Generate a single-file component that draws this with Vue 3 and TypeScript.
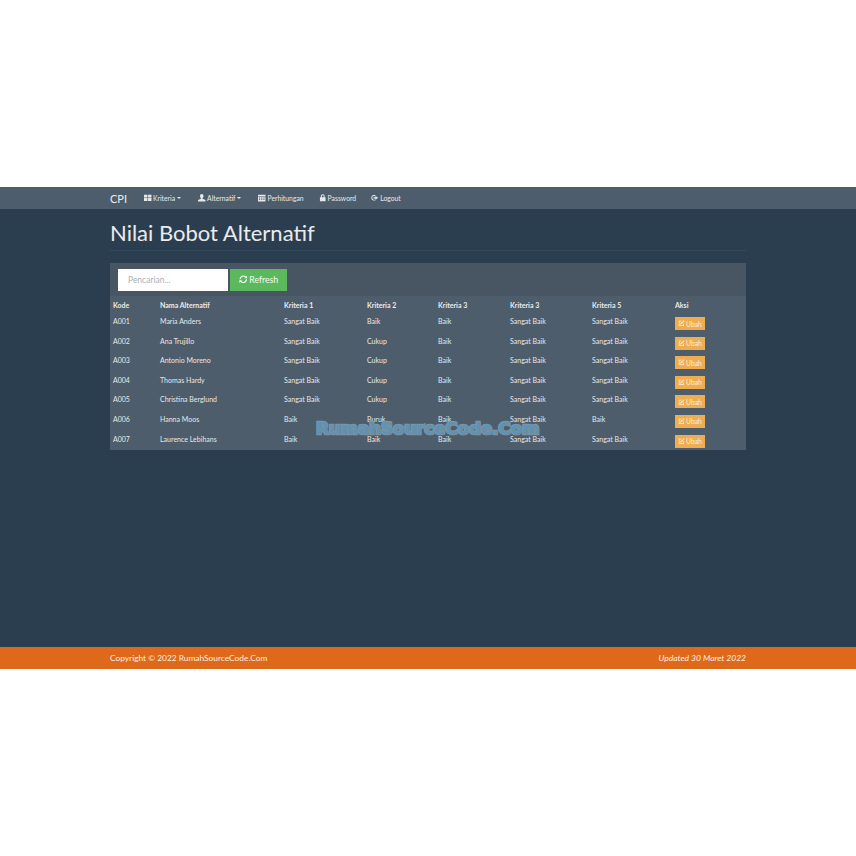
<script setup lang="ts">
interface Row {
  kode: string
  nama: string
  nilai: string[]
}

const headers = ['Kode', 'Nama Alternatif', 'Kriteria 1', 'Kriteria 2', 'Kriteria 3', 'Kriteria 3', 'Kriteria 5', 'Aksi']

const rows: Row[] = [
  { kode: 'A001', nama: 'Maria Anders', nilai: ['Sangat Baik', 'Baik', 'Baik', 'Sangat Baik', 'Sangat Baik'] },
  { kode: 'A002', nama: 'Ana Trujillo', nilai: ['Sangat Baik', 'Cukup', 'Baik', 'Sangat Baik', 'Sangat Baik'] },
  { kode: 'A003', nama: 'Antonio Moreno', nilai: ['Sangat Baik', 'Cukup', 'Baik', 'Sangat Baik', 'Sangat Baik'] },
  { kode: 'A004', nama: 'Thomas Hardy', nilai: ['Sangat Baik', 'Cukup', 'Baik', 'Sangat Baik', 'Sangat Baik'] },
  { kode: 'A005', nama: 'Christina Berglund', nilai: ['Sangat Baik', 'Cukup', 'Baik', 'Sangat Baik', 'Sangat Baik'] },
  { kode: 'A006', nama: 'Hanna Moos', nilai: ['Baik', 'Buruk', 'Baik', 'Sangat Baik', 'Baik'] },
  { kode: 'A007', nama: 'Laurence Lebihans', nilai: ['Baik', 'Baik', 'Baik', 'Sangat Baik', 'Sangat Baik'] }
]
</script>

<template>
  <div class="page">
    <nav class="navbar">
      <div class="container nav-inner">
        <span class="brand">CPI</span>
        <a class="nav-link nav-drop">
          <svg class="icon" viewBox="0 0 12 12"><path d="M0 1h5.500v4.500H0zM6.500 1H12v4.500H6.500zM0 6.500h5.500V11H0zM6.500 6.500H12V11H6.500z" /></svg>
          Kriteria <i class="caret"></i>
        </a>
        <a class="nav-link nav-drop">
          <svg class="icon" viewBox="0 0 12 12"><path d="M6 0c1.800 0 2.800 1.300 2.800 3.200 0 1.500-.7 2.800-1.500 3.400v1L12 9.500V12H0V9.500l4.700-1.900v-1C3.900 6 3.200 4.700 3.200 3.200 3.200 1.300 4.200 0 6 0z" /></svg>
          Alternatif <i class="caret"></i>
        </a>
        <a class="nav-link">
          <svg class="icon" viewBox="0 0 12 12"><path d="M0 1h12v2.500H0zM0 4.200h12V12H0zM1.500 5.500v1.500h2V5.500zM5 5.500v1.500h2V5.500zM8.500 5.500v1.500h2V5.500zM1.500 8.200v1.500h2V8.200zM5 8.200v1.500h2V8.200zM8.500 8.200v1.500h2V8.200z" fill-rule="evenodd" /></svg>
          Perhitungan
        </a>
        <a class="nav-link">
          <svg class="icon" viewBox="0 0 12 12"><path d="M3 5V3.500C3 1.600 4.200.5 6 .5s3 1.100 3 3V5h1.500v6.500h-9V5zM4.500 5h3V3.500C7.500 2.500 7 2 6 2s-1.500.5-1.500 1.500z" fill-rule="evenodd" /></svg>
          Password
        </a>
        <a class="nav-link">
          <svg class="icon" viewBox="0 0 12 12"><path d="M7 1.500H4.500C2 1.500.5 3.200.5 6s1.500 4.500 4 4.500H7V9H4.500C3 9 2 7.800 2 6s1-3 2.500-3H7zM7 3l4.500 3L7 9V7H4V5h3z" /></svg>
          Logout
        </a>
      </div>
    </nav>

    <main class="content">
      <div class="container">
        <h1 class="title">Nilai Bobot Alternatif</h1>
        <section class="panel">
          <div class="panel-head">
            <input class="search" type="text" placeholder="Pencarian..." />
            <button class="btn-refresh" type="button">
              <svg class="icon icon-refresh" viewBox="0 0 12 12">
                <path d="M10.500 6A4.500 4.500 0 0 1 2.600 9" />
                <path d="M1.500 6A4.500 4.500 0 0 1 9.400 3" />
                <path class="solid" d="M11.500 .8v3.700H7.800zM.5 11.200V7.500h3.700z" />
              </svg>
              Refresh
            </button>
          </div>
          <table class="grid">
            <thead>
              <tr>
                <th v-for="(h, i) in headers" :key="i">{{ h }}</th>
              </tr>
            </thead>
            <tbody>
              <tr v-for="row in rows" :key="row.kode">
                <td>{{ row.kode }}</td>
                <td>{{ row.nama }}</td>
                <td v-for="(n, i) in row.nilai" :key="i">{{ n }}</td>
                <td class="cell-action">
                  <button class="btn-edit" type="button">
                    <svg class="icon" viewBox="0 0 12 12"><path d="M9 2.200 10.600 .6 12 2 10.400 3.600zM8.400 2.800 9.800 4.200 5.500 8.500H4V7zM1.500 1.500H7L5.700 2.800H2.800v6.900h6.900V6.800L11 5.500v5.500H1.500z" /></svg>
                    Ubah
                  </button>
                </td>
              </tr>
            </tbody>
          </table>
        </section>
      </div>
      <div class="watermark">RumahSourceCode.Com</div>
    </main>

    <footer class="footer">
      <div class="container footer-inner">
        <span class="copyright">Copyright © 2022 RumahSourceCode.Com</span>
        <em>Updated 30 Maret 2022</em>
      </div>
    </footer>
  </div>
</template>

<style scoped>
.page {
  padding-top: 187px;
  font-family: Lato, "Liberation Sans", sans-serif;
  color: #e6e8ea;
  font-size: 7px;
  position: relative;
}

.container {
  width: 636px;
  margin: 0 auto;
}

.navbar {
  height: 22px;
  background: #4e5d6c;
}

.nav-inner {
  display: flex;
  align-items: center;
  height: 100%;
}

.brand {
  font-size: 11px;
  width: 34px;
  color: #ebebeb;
}

.nav-link {
  display: inline-flex;
  align-items: center;
  gap: 1.500px;
  margin-right: 15px;
  font-size: 6.800px;
  color: #e6e8ea;
}

.nav-drop {
  margin-right: 17.500px;
}

.icon {
  width: 7.500px;
  height: 7.500px;
  fill: currentColor;
  flex: none;
}

.caret {
  display: inline-block;
  width: 0;
  height: 0;
  border-top: 2px solid #ebebeb;
  border-left: 2px solid transparent;
  border-right: 2px solid transparent;
}

.content {
  height: 438px;
  background: #2b3e50;
  position: relative;
  box-sizing: border-box;
  padding-top: 11px;
}

.title {
  margin: 0;
  padding-bottom: 4px;
  font-size: 22px;
  font-weight: 400;
  line-height: 26px;
  color: #ebebeb;
  border-bottom: 1px solid #34495c;
}

.panel {
  margin-top: 12px;
  padding-bottom: 1px;
  background: #4e5d6c;
}

.panel-head {
  display: flex;
  align-items: center;
  gap: 2px;
  height: 33px;
  padding-left: 8px;
  background: #485563;
}

.search {
  width: 110px;
  height: 22px;
  box-sizing: border-box;
  border: 0;
  padding: 0 10px;
  background: #fff;
  font-family: inherit;
  font-size: 8.500px;
}

.search::placeholder {
  color: #a9b0b7;
}

.btn-refresh {
  display: inline-flex;
  align-items: center;
  justify-content: center;
  gap: 2px;
  width: 57px;
  height: 22px;
  border: 0;
  padding: 0;
  background: #5cb85c;
  color: #f4fbf4;
  font-family: inherit;
  font-size: 8.700px;
}

.icon-refresh {
  width: 8.500px;
  height: 8.500px;
  fill: none;
  stroke: #fff;
  stroke-width: 1.600;
}

.icon-refresh .solid {
  fill: #fff;
  stroke: none;
}

.grid {
  width: 100%;
  border-collapse: collapse;
  table-layout: fixed;
}

.grid th:nth-child(1) { width: 47px; }
.grid th:nth-child(2) { width: 124px; }
.grid th:nth-child(3) { width: 83px; }
.grid th:nth-child(4) { width: 71px; }
.grid th:nth-child(5) { width: 72px; }
.grid th:nth-child(6) { width: 82px; }
.grid th:nth-child(7) { width: 83px; }

.grid th {
  box-sizing: border-box;
  height: 16px;
  padding: 1px 0 0 3px;
  text-align: left;
  font-weight: 700;
  color: #ebebeb;
  vertical-align: middle;
}

.grid td {
  height: 19.600px;
  padding: 0 0 1.600px 3px;
  box-sizing: border-box;
  color: #e6e8ea;
  vertical-align: middle;
}

.grid td.cell-action {
  padding: 5px 0 0 3px;
  vertical-align: top;
}

.btn-edit {
  display: flex;
  align-items: center;
  gap: 1.500px;
  width: 30px;
  height: 13px;
  padding: 0 0 0 3px;
  border: 0;
  background: #eead50;
  color: #fbeeda;
  font-family: inherit;
  font-size: 6.800px;
}

.btn-edit .icon {
  width: 6.500px;
  height: 6.500px;
}

.watermark {
  position: absolute;
  left: 316px;
  top: 207px;
  font-family: "DejaVu Sans", sans-serif;
  font-weight: 700;
  font-size: 16.600px;
  line-height: 26px;
  white-space: nowrap;
  color: #5f93b3;
  -webkit-text-stroke: 2.500px #7396ab;
  paint-order: stroke fill;
  text-shadow: 1px 1px 1px #7f8c98;
}

.footer {
  height: 22px;
  background: #df691a;
  color: #fbeee4;
  font-size: 8.500px;
}

.copyright {
  font-size: 8.350px;
}

.footer-inner {
  display: flex;
  align-items: center;
  justify-content: space-between;
  height: 100%;
}
</style>

<style>
html,
body {
  background: #fff;
}
</style>
